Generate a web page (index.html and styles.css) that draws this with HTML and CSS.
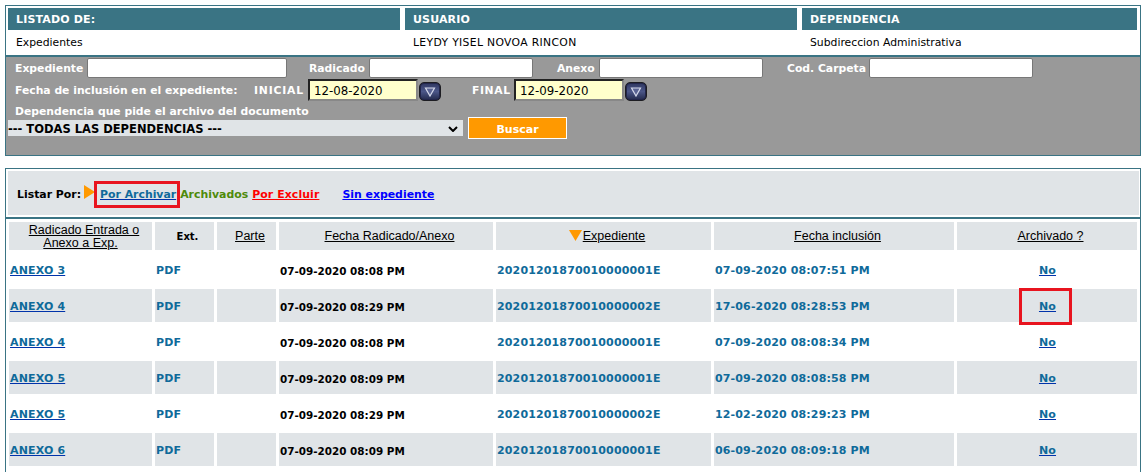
FILE: index.html
```html
<!DOCTYPE html>
<html lang="es">
<head>
<meta charset="utf-8">
<title>Listado de expedientes</title>
<link rel="stylesheet" href="styles.css">
</head>
<body>
<section class="top-box">
  <div class="info-grid">
    <div class="info-head">LISTADO DE:</div>
    <div class="info-head">USUARIO</div>
    <div class="info-head">DEPENDENCIA</div>
    <div class="info-value">Expedientes</div>
    <div class="info-value caps">LEYDY YISEL NOVOA RINCON</div>
    <div class="info-value">Subdireccion Administrativa</div>
  </div>
  <form class="filters">
    <div class="row-fields">
      <label class="lb lb-exp">Expediente</label><input class="txt w200" type="text">
      <label class="lb lb-rad">Radicado</label><input class="txt w164" type="text">
      <label class="lb lb-anx">Anexo</label><input class="txt w164" type="text">
      <label class="lb lb-cod">Cod. Carpeta</label><input class="txt w164" type="text">
    </div>
    <div class="row-dates">
      <span class="lb lb-fecha">Fecha de inclusión en el expediente:</span>
      <span class="lb lb-ini">INICIAL</span>
      <input class="date" type="text" value="12-08-2020">
      <button class="cal" type="button" aria-label="Calendario"><svg width="12" height="10" viewBox="0 0 12 10"><path d="M1.5 1h9L6 9z" fill="#5a6494" stroke="#d5d9ea" stroke-width="1.2"/></svg></button>
      <span class="lb lb-fin">FINAL</span>
      <input class="date" type="text" value="12-09-2020">
      <button class="cal" type="button" aria-label="Calendario"><svg width="12" height="10" viewBox="0 0 12 10"><path d="M1.5 1h9L6 9z" fill="#5a6494" stroke="#d5d9ea" stroke-width="1.2"/></svg></button>
    </div>
    <div class="lb lb-dep">Dependencia que pide el archivo del documento</div>
    <div class="row-select">
      <div class="select">
        <span>--- TODAS LAS DEPENDENCIAS ---</span>
        <svg width="10" height="6" viewBox="0 0 10 6"><path d="M1 1l4 4 4-4" fill="none" stroke="#000" stroke-width="2"/></svg>
      </div>
      <button class="buscar" type="button">Buscar</button>
    </div>
  </form>
</section>

<section class="list-box">
  <div class="list-by">
    <span class="list-label">Listar Por:</span>
    <svg class="arrow-right" width="11" height="14" viewBox="0 0 11 14"><path d="M0 0l11 7-11 7z" fill="#f90"/></svg>
    <a class="lnk mark mark-a" href="#">Por Archivar</a>
    <a class="lnk-green" href="#">Archivados</a>
    <a class="lnk-red" href="#">Por Excluir</a>
    <a class="lnk-blue" href="#">Sin expediente</a>
  </div>
  <table class="data">
    <colgroup>
      <col class="c1"><col class="c2"><col class="c3"><col class="c4"><col class="c5"><col class="c6"><col class="c7">
    </colgroup>
    <thead>
      <tr>
        <th class="two-lines"><a href="#">Radicado Entrada o<br><span class="back">Anexo a Exp.</span></a></th>
        <th class="plain">Ext.</th>
        <th><a href="#">Parte</a></th>
        <th><a href="#">Fecha Radicado/Anexo</a></th>
        <th><svg class="arrow-down" width="13" height="11" viewBox="0 0 13 11"><path d="M0 0h13L6.5 11z" fill="#f90"/></svg><a href="#">Expediente</a></th>
        <th><a href="#">Fecha inclusión</a></th>
        <th><a href="#">Archivado ?</a></th>
      </tr>
    </thead>
    <tbody>
      <tr><td><a class="lnk" href="#">ANEXO 3</a></td><td class="blue">PDF</td><td></td><td class="black">07-09-2020 08:08 PM</td><td class="blue">20201201870010000001E</td><td class="blue">07-09-2020 08:07:51 PM</td><td class="ctr"><a class="lnk" href="#">No</a></td></tr>
      <tr><td><a class="lnk" href="#">ANEXO 4</a></td><td class="blue">PDF</td><td></td><td class="black">07-09-2020 08:29 PM</td><td class="blue">20201201870010000002E</td><td class="blue">17-06-2020 08:28:53 PM</td><td class="ctr"><a class="lnk mark mark-b" href="#">No</a></td></tr>
      <tr><td><a class="lnk" href="#">ANEXO 4</a></td><td class="blue">PDF</td><td></td><td class="black">07-09-2020 08:08 PM</td><td class="blue">20201201870010000001E</td><td class="blue">07-09-2020 08:08:34 PM</td><td class="ctr"><a class="lnk" href="#">No</a></td></tr>
      <tr><td><a class="lnk" href="#">ANEXO 5</a></td><td class="blue">PDF</td><td></td><td class="black">07-09-2020 08:09 PM</td><td class="blue">20201201870010000001E</td><td class="blue">07-09-2020 08:08:58 PM</td><td class="ctr"><a class="lnk" href="#">No</a></td></tr>
      <tr><td><a class="lnk" href="#">ANEXO 5</a></td><td class="blue">PDF</td><td></td><td class="black">07-09-2020 08:29 PM</td><td class="blue">20201201870010000002E</td><td class="blue">12-02-2020 08:29:23 PM</td><td class="ctr"><a class="lnk" href="#">No</a></td></tr>
      <tr><td><a class="lnk" href="#">ANEXO 6</a></td><td class="blue">PDF</td><td></td><td class="black">07-09-2020 08:09 PM</td><td class="blue">20201201870010000001E</td><td class="blue">06-09-2020 08:09:18 PM</td><td class="ctr"><a class="lnk" href="#">No</a></td></tr>
    </tbody>
  </table>
</section>
</body>
</html>
```
FILE: styles.css
```css
html, body { margin: 0; padding: 0; height: 472px; overflow: hidden; background: #fff; }
body {
  padding: 5px 0 0 5px;
  box-sizing: border-box;
  font: 11px "DejaVu Sans", Verdana, sans-serif;
  color: #000;
}
.top-box {
  width: 1136px;
  height: 151px;
  box-sizing: border-box;
  border: 1px solid #3a7484;
  display: flex;
  flex-direction: column;
}
.info-grid {
  display: grid;
  grid-template-columns: 392px 392px 335px;
  grid-template-rows: 22px 25px;
  column-gap: 5px;
  padding: 2px 3px 0 2px;
  border-bottom: 2px solid #3a7484;
}
.info-head {
  background: #3a7484;
  color: #fff;
  font-weight: 700;
  line-height: 24px;
  height: 22px;
  letter-spacing: .15px;
  padding-left: 8px;
}
.info-value { font-size: 10.8px; line-height: 25px; padding-left: 8px; }
.info-value.caps { letter-spacing: .33px; }
.filters {
  flex: 1;
  background: #999;
  display: flex;
  flex-direction: column;
  padding: 1px 0 0 2px;
}
.lb { color: #fff; font-weight: 700; font-size: 10.8px; white-space: nowrap; }
.row-fields { display: flex; align-items: center; height: 20px; }
.row-fields .lb { padding-top: 1px; }
.txt {
  height: 20px;
  box-sizing: border-box;
  background: #fff;
  border: 1px solid #777;
  border-radius: 2px;
  padding: 0;
  margin: 0;
}
.w200 { width: 200px; }
.w164 { width: 164px; }
.lb-exp { margin-left: 7px; width: 72px; }
.lb-rad { margin-left: 22px; width: 60px; }
.lb-anx { margin-left: 24px; width: 42px; }
.lb-cod { margin-left: 24px; width: 82px; }
.row-dates { display: flex; align-items: center; height: 22px; margin-top: 1px; }
.lb-fecha { margin-left: 7px; width: 239px; }
.lb-ini { width: 54px; letter-spacing: .8px; }
.lb-fin { margin-left: 31px; width: 42px; letter-spacing: .6px; }
.date {
  width: 110px;
  height: 22px;
  box-sizing: border-box;
  margin: 0;
  padding: 1px 0 0 4px;
  background: #ffc;
  color: #000;
  font: 11.8px "DejaVu Sans", Verdana, sans-serif;
  border: 2px solid #777;
  border-top-color: #222;
  border-left-color: #222;
  border-right-color: #888;
  border-bottom-color: #888;
}
.cal {
  width: 22px;
  height: 19px;
  margin: 3px 0 0 1px;
  padding: 0;
  border: 1px solid #1d1d22;
  border-radius: 5px;
  background: linear-gradient(#2f3760, #4b5688 50%, #232a4c);
  box-shadow: inset 0 0 0 1px #22254a;
  display: flex;
  align-items: center;
  justify-content: center;
}
.lb-dep { margin: 3px 0 0 7px; height: 15px; line-height: 15px; }
.row-select { display: flex; align-items: center; height: 22px; margin-top: -2px; }
.select {
  width: 455px;
  height: 16px;
  background: #e0e4e7;
  display: flex;
  align-items: center;
  justify-content: space-between;
  padding: 1px 5px 0 0;
  box-sizing: border-box;
  font-weight: 700;
  font-size: 11.5px;
}
.buscar {
  width: 99px;
  height: 22px;
  margin-left: 5px;
  padding: 2px 0 0;
  background: #f90;
  border: 1px solid #fff;
  color: #fff;
  font: 700 11px "DejaVu Sans", Verdana, sans-serif;
}
.list-box {
  width: 1136px;
  height: 305px;
  margin-top: 12px;
  box-sizing: border-box;
  border: 1px solid #3a7484;
  border-bottom: 0;
  padding-top: 2px;
}
.list-by {
  height: 44px;
  margin: 0 1px 0 2px;
  background: #e0e4e7;
  display: flex;
  align-items: center;
  font-weight: 700;
  font-size: 10.9px;
  padding: 2px 0 0 9px;
  box-sizing: border-box;
}
.list-label { width: 67px; }
.arrow-right { margin-right: 5px; margin-top: -5px; }
.lnk-green { color: #4e8a0a; text-decoration: none; margin-left: 4px; }
.lnk-red { color: #f00; margin-left: 4px; letter-spacing: .1px; }
.lnk-blue { color: #00f; margin-left: 23px; }
.lnk { color: #0f6a9a; text-decoration-color: #0033aa; font-weight: 700; }
.mark { position: relative; }
.mark::after {
  content: "";
  position: absolute;
  border: 3px solid #e8141f;
  box-sizing: border-box;
  pointer-events: none;
}
.mark-a::after { left: -6px; right: -4px; top: -7px; bottom: -7px; }
.mark-b::after { left: -20px; right: -16px; top: -12px; bottom: -12px; }
.data {
  width: 1134px;
  table-layout: fixed;
  border-collapse: separate;
  border-spacing: 3px;
  border-top: 2px solid #3a7484;
  margin-top: 2px;
}
.c1 { width: 143px; }
.c2, .c3 { width: 59px; }
.c4 { width: 214px; }
.c5 { width: 215px; }
.c6 { width: 240px; }
.c7 { width: 180px; }
th {
  height: 28px;
  box-sizing: border-box;
  padding: 1px 0 0 7px;
  background: #e0e4e7;
  font: 400 12.5px/13px "Liberation Sans", Arial, sans-serif;
  text-align: center;
  vertical-align: middle;
}
th.two-lines { padding-top: 2px; }
.back { margin-left: -7px; }
th a { color: #000; }
th.plain { font: 700 10px "DejaVu Sans", Verdana, sans-serif; padding-left: 6px; }
.arrow-down { vertical-align: 3px; margin: -6px 1px -4px 0; }
td {
  height: 33px;
  padding: 2px 0 0 1px;
  box-sizing: border-box;
  font-weight: 700;
  font-size: 11px;
  vertical-align: middle;
}
td .lnk { letter-spacing: .15px; }
tbody tr:nth-child(even) td { background: #e0e4e7; }
td.blue { color: #0f6a9a; letter-spacing: .14px; }
td.black { color: #000; font-size: 10.4px; }
td.ctr { text-align: center; }
```
